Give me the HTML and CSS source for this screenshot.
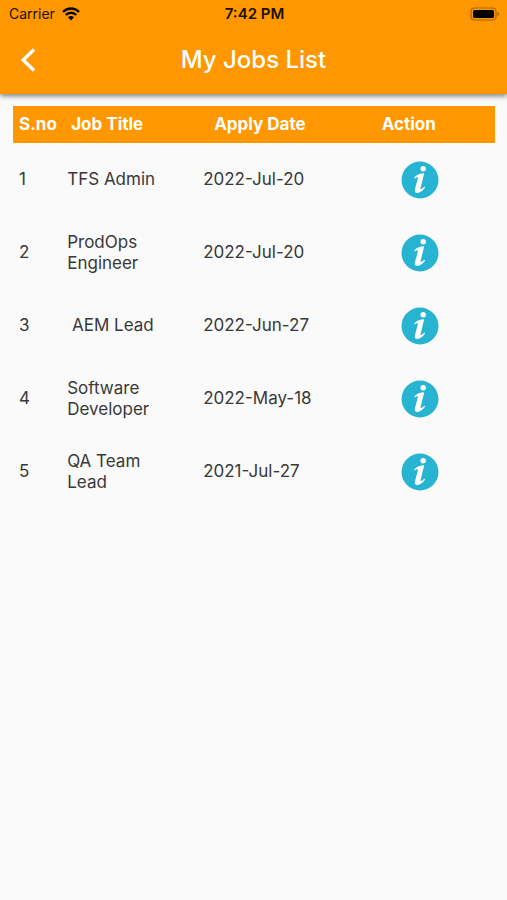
FILE: index.html
```html
<!DOCTYPE html>
<html lang="en">
<head>
<meta charset="utf-8">
<meta name="viewport" content="width=device-width, initial-scale=1">
<title>My Jobs List</title>
<link rel="stylesheet" href="styles.css">
</head>
<body>
<svg class="defs" aria-hidden="true">
  <symbol id="info" viewBox="0 0 38 38">
    <circle cx="19" cy="19" r="18.5" fill="#27b4d3"/>
    <circle cx="22.2" cy="7.8" r="2.7" fill="#fff"/>
    <path d="M13.4 16.2C16 13.6 19 12.4 23.2 12.2L19.6 27C19.2 28.8 20 28.8 23.4 25.6L24 26.8C21.4 30 18.8 32 16.4 32C14 32 13.4 30.4 14 28L16.8 17.6C17.2 15.8 16.4 15.8 13.8 17.4Z" fill="#fff"/>
  </symbol>
</svg>
<header class="app-header">
  <div class="status">
    <div class="carrier">
      <span>Carrier</span>
      <svg width="18" height="14" viewBox="0 0 18 14" aria-hidden="true">
        <g fill="none" stroke="#080400" stroke-width="2.4">
          <path d="M1 5C5.4 .4 12.6 .4 17 5"/>
          <path d="M3.8 8C6.7 5 11.3 5 14.2 8"/>
        </g>
        <path d="M6 10.2C7.7 8.6 10.3 8.6 12 10.2L9 13.4Z" fill="#080400"/>
      </svg>
    </div>
    <time class="clock">7:42 PM</time>
    <svg class="battery" width="30" height="14" viewBox="0 0 30 14" aria-hidden="true">
      <rect x="1" y="1" width="25" height="12" rx="3.5" fill="none" stroke="#a86500" stroke-width="1.2"/>
      <rect x="3" y="3" width="21" height="8" rx="1.5" fill="#000"/>
      <path d="M27.5 5C29.8 5.5 29.8 8.5 27.5 9Z" fill="#a86500"/>
    </svg>
  </div>
  <div class="toolbar">
    <button class="back" type="button" aria-label="Back">
      <svg width="16" height="26" viewBox="0 0 16 26" aria-hidden="true"><path d="M14 2.5L3.2 13L14 23.5" fill="none" stroke="#fff" stroke-width="3.4"/></svg>
    </button>
    <h1>My Jobs List</h1>
  </div>
</header>
<main>
  <table class="jobs">
    <colgroup><col class="col-number"><col class="col-title"><col class="col-date"><col class="col-action"></colgroup>
    <thead>
      <tr><th scope="col">S.no</th><th scope="col">Job Title</th><th scope="col">Apply Date</th><th scope="col">Action</th></tr>
    </thead>
    <tbody>
      <tr><td>1</td><td>TFS Admin</td><td>2022-Jul-20</td><td><button class="info" type="button" aria-label="Details"><svg><use href="#info"/></svg></button></td></tr>
      <tr><td>2</td><td>ProdOps Engineer</td><td>2022-Jul-20</td><td><button class="info" type="button" aria-label="Details"><svg><use href="#info"/></svg></button></td></tr>
      <tr><td>3</td><td> AEM Lead</td><td>2022-Jun-27</td><td><button class="info" type="button" aria-label="Details"><svg><use href="#info"/></svg></button></td></tr>
      <tr><td>4</td><td>Software Developer</td><td>2022-May-18</td><td><button class="info" type="button" aria-label="Details"><svg><use href="#info"/></svg></button></td></tr>
      <tr><td>5</td><td>QA Team Lead</td><td>2021-Jul-27</td><td><button class="info" type="button" aria-label="Details"><svg><use href="#info"/></svg></button></td></tr>
    </tbody>
  </table>
</main>
</body>
</html>
```

FILE: styles.css
```css
* {
  box-sizing: border-box;
}

body {
  margin: 0;
  background: #fafafa;
  color: #383838;
  font-family: Inter, "Liberation Sans", sans-serif;
}

button {
  padding: 0;
  border: 0;
  background: none;
  cursor: pointer;
}

svg {
  display: block;
}

.defs {
  display: none;
}

.app-header {
  padding-bottom: 2px;
  background: #ff9800;
  box-shadow: 0 2px 5px rgba(0, 0, 0, 0.5);
}

.status {
  display: grid;
  grid-template-columns: 1fr auto 1fr;
  align-items: center;
  height: 27px;
  padding: 0 7px 0 9px;
  color: #1c1000;
  font-size: 14px;
}

.carrier {
  display: flex;
  align-items: center;
  gap: 7px;
}

.clock {
  font-size: 15px;
  font-weight: 600;
}

.battery {
  justify-self: end;
}

.toolbar {
  display: grid;
  grid-template-columns: 56px 1fr 56px;
  align-items: center;
  height: 65px;
}

.back {
  display: flex;
  align-items: center;
  justify-content: center;
  height: 48px;
}

h1 {
  margin: 0;
  color: #fff;
  font-size: 24px;
  font-weight: 500;
  line-height: 32px;
  text-align: center;
}

main {
  padding: 12px 12px 0 13px;
}

.jobs {
  width: 100%;
  border-collapse: collapse;
  table-layout: fixed;
  font-size: 17px;
  line-height: 21px;
}

.col-number {
  width: 10%;
}

.col-title {
  width: 28%;
}

.col-date {
  width: 36%;
}

th {
  height: 37px;
  padding: 0 0 0 10px;
  background: #ff9800;
  color: #fff;
  font-weight: 700;
  text-align: left;
  white-space: nowrap;
}

td {
  height: 73px;
  padding: 0 0 0 6px;
  white-space: pre-wrap;
}

th:first-child {
  padding-left: 6px;
}

td:nth-child(2) {
  padding-right: 36px;
}

th:nth-child(3) {
  padding-left: 18px;
}

td:nth-child(3) {
  padding-left: 7px;
}

th:last-child {
  padding-left: 12px;
}

td:last-child {
  padding-left: 31px;
}

.info {
  display: block;
  border-radius: 50%;
}

.info svg {
  width: 38px;
  height: 38px;
}
```
